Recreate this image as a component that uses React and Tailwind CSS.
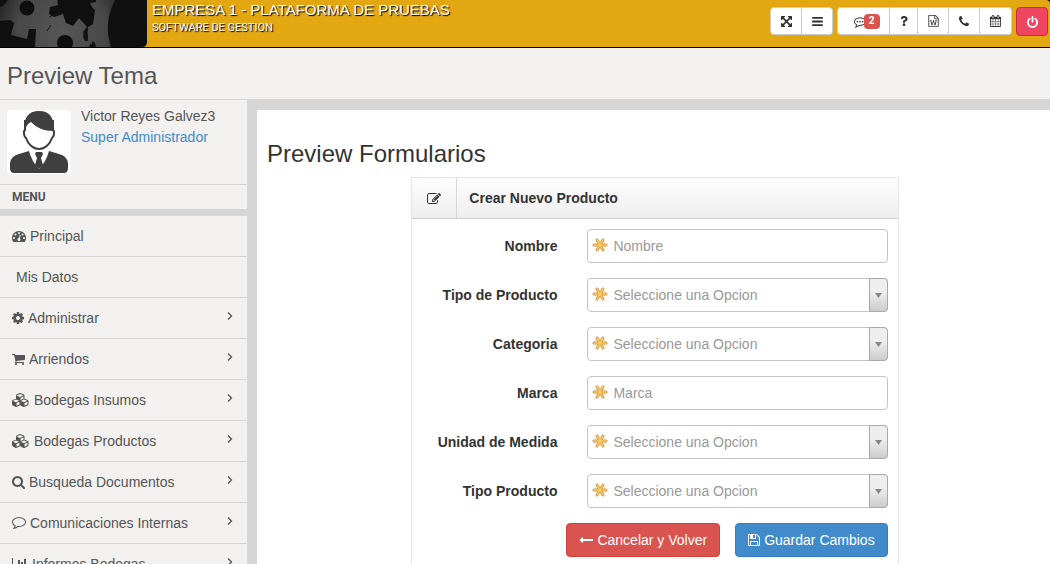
import React from "react";
import { FaQuestion } from "react-icons/fa";

const ICONS = {
  expand: ["0 0 1536 1536", "M1283 413L928 768l355 355 144-144q29-31 70-14 39 17 39 59v448q0 26-19 45t-45 19h-448q-42 0-59-40-17-39 14-69l144-144-355-355-355 355 144 144q31 30 14 69-17 40-59 40H64q-26 0-45-19t-19-45v-448q0-42 40-59 39-17 69 14l144 144 355-355-355-355-144 144q-19 19-45 19-12 0-24-5-40-17-40-59V64q0-26 19-45T64 0h448q42 0 59 40 17 39-14 69L413 253l355 355 355-355-144-144q-31-30-14-69 17-40 59-40h448q26 0 45 19t19 45v448q0 42-39 59-13 5-25 5-26 0-45-19z"],
  bars: ["0 0 1536 1280", "M64 0h1408q64 0 64 64v128q0 64-64 64H64Q0 256 0 192V64Q0 0 64 0zM64 512h1408q64 0 64 64v128q0 64-64 64H64Q0 768 0 704V576q0-64 64-64zM64 1024h1408q64 0 64 64v128q0 64-64 64H64q-64 0-64-64v-128q0-64 64-64z"],
  word: ["0 0 1536 1792", "M1468 380q28 28 48 76t20 88v1152q0 40-28 68t-68 28H96q-40 0-68-28t-28-68V96q0-40 28-68T96 0h896q40 0 88 20t76 48zm-444-244v376h376q-10-29-22-41l-313-313q-12-12-41-22zm384 1528V640H992q-40 0-68-28t-28-68V128H128v1536h1280zM233 768v107h70l164 661h159l128-485q7-20 10-46 2-16 2-24h4l3 24q1 3 3.5 20t5.5 26l128 485h159l164-661h70V768h-300v107h90l-99 438q-5 20-7 46l-2 21h-4l-3-21q-1-5-4-21t-5-25L825 768H711l-144 545q-1 4-4.5 24.5T557 1359l-4 21h-4l-2-21q-2-26-7-46l-99-438h90V768H233z"],
  phone: ["0 0 1408 1408", "M1408 1112q0 27-10 70.5t-21 68.5q-21 50-122 106-94 51-186 51-27 0-53-3.5t-57.5-12.5-47-14.5-55.5-20.5-49-18q-98-35-175-83-127-79-264-216T152 776q-48-77-83-175-3-9-18-49t-20.5-55.5-14.5-47T3.5 392 0 339q0-92 51-186Q107 52 157 31q25-11 68.5-21T296 0q14 0 21 3 18 6 53 76 11 19 30 54t35 63.5 31 53.5q3 4 17.5 25t21.5 35.5 7 28.5q0 20-28.5 50t-62 55-62 53-28.5 46q0 9 5 22.5t8.5 20.5 14 24 11.5 19q76 137 174 235t235 174q2 1 19 11.5t24 14 20.5 8.5 22.5 5q18 0 46-28.5t53-62 55-62 50-28.5q14 0 28.5 7t35.5 21.5 25 17.5q25 15 53.5 31t63.5 35 54 30q70 35 76 53 3 7 3 21z"],
  calendar: ["0 0 1664 1792", "M128 1664h288v-288H128v288zm352 0h320v-288H480v288zm-352-352h288V992H128v320zm352 0h320V992H480v320zM128 928h288V640H128v288zm736 736h320v-288H864v288zM480 928h320V640H480v288zm768 736h288v-288h-288v288zm-384-352h320V992H864v320zM512 448V160q0-13-9.5-22.5T480 128h-64q-13 0-22.5 9.5T384 160v288q0 13 9.5 22.5T416 480h64q13 0 22.5-9.5T512 448zm736 864h288V992h-288v320zM864 928h320V640H864v288zm384 0h288V640h-288v288zm32-480V160q0-13-9.5-22.5T1248 128h-64q-13 0-22.5 9.5T1152 160v288q0 13 9.5 22.5t22.5 9.5h64q13 0 22.5-9.5t9.5-22.5zm384-64v1280q0 52-38 90t-90 38H128q-52 0-90-38t-38-90V384q0-52 38-90t90-38h128v-96q0-66 47-113T416 0h64q66 0 113 47t47 113v96h384v-96q0-66 47-113t113-47h64q66 0 113 47t47 113v96h128q52 0 90 38t38 90z"],
  power: ["0 0 1536 1664", "M1536 896q0 156-61 298t-164 245-245 164-298 61-298-61-245-164T61 1194 0 896q0-182 80.5-343T307 283q43-32 95.5-25t83.5 50q32 42 24.5 94.5T461 487q-98 74-151.5 181T256 896q0 104 40.5 198.5t109.5 163.5 163.5 109.5T768 1408t198.5-40.5T1130 1258t109.5-163.5T1280 896q0-121-53.5-228T1075 487q-42-32-49.5-84.5T1050 308q31-43 84-50t95 25q146 109 226.5 270t80.5 343zM896 128v640q0 52-38 90t-90 38-90-38-38-90V128q0-52 38-90t90-38 90 38 38 90z"],
  comment: ["0 0 1792 1536", "M896 128q-204 0-381.5 69.5T232.5 385 128 640q0 112 71.5 213.5T401 1029l87 50-27 96q-24 91-70 172 152-63 275-171l43-38 57 6q69 8 130 8 204 0 381.5-69.5t282-187.5T1664 640t-104.5-255-282-187.5T896 128zm896 512q0 174-120 321.5t-326 233-450 85.5q-70 0-145-8-198 175-460 242-49 14-114 22h-5q-15 0-27-10.5t-16-27.5v-1q-3-4-.5-12t2-10 4.5-9.5l6-9 7-8.5 8-9q7-8 31-34.5t34.5-38 31-39.5 32.5-51 27-59 26-76q-157-89-247.5-220T0 640q0-130 71-248.5T262 187 548 50.5 896 0t348 50.5T1530 187t191 204.5T1792 640z"],
  cog: ["0 0 1536 1536", "M1024 768q0-106-75-181t-181-75-181 75-75 181 75 181 181 75 181-75 75-181zm512-109v222q0 12-8 23t-20 13l-185 28q-19 54-39 91 35 50 107 138 10 12 10 25t-9 23q-27 37-99 108t-94 71q-12 0-26-9l-138-108q-44 23-91 38-16 136-29 186-7 28-36 28H657q-14 0-24.5-8.5T621 1506l-28-184q-49-16-90-37l-141 107q-10 9-25 9-14 0-25-11-126-114-165-168-7-10-7-23 0-12 8-23 15-21 51-66.5t54-70.5q-27-50-41-99L29 913q-13-2-21-12.5T0 877V655q0-12 8-23t19-13l186-28q14-46 39-92-40-57-107-138-10-12-10-24 0-10 9-23 26-36 98.5-107.5T337 135q13 0 26 10l138 107q44-23 91-38 16-136 29-186 7-28 36-28h222q14 0 24.5 8.5T915 30l28 184q49 16 90 37l142-107q9-9 24-9 13 0 25 10 129 119 165 170 7 8 7 22 0 12-8 23-15 21-51 66.5t-54 70.5q26 50 41 98l183 28q13 2 21 12.5t8 23.5z"],
  cart: ["0 0 1664 1536", "M640 1408q0 52-38 90t-90 38-90-38-38-90 38-90 90-38 90 38 38 90zm896 0q0 52-38 90t-90 38-90-38-38-90 38-90 90-38 90 38 38 90zm128-1088v512q0 24-16.5 42.5T1607 896L563 1018q13 60 13 70 0 16-24 64h920q26 0 45 19t19 45-19 45-45 19H448q-26 0-45-19t-19-45q0-11 8-31.5t16-36 21.5-40T445 1051L268 252H64q-26 0-45-19T0 188t19-45 45-19h256q16 0 28.5 6.5T368 146t13 24.5 8 26 5.5 29.5 4.5 30h1201q26 0 45 19t19 45z"],
  tachometer: ["0 0 1792 1408", "M384 896q0-53-37.5-90.5T256 768t-90.5 37.5T128 896t37.5 90.5T256 1024t90.5-37.5T384 896zm192-448q0-53-37.5-90.5T448 320t-90.5 37.5T320 448t37.5 90.5T448 576t90.5-37.5T576 448zm428 481l101-382q6-26-7.5-48.5T1059 469t-48 6.5-30 39.5L880 898q-60 5-107 43.5t-63 98.5q-20 77 20 146t117 89 146-20 89-117q16-60-6-117t-72-91zm660-33q0-53-37.5-90.5T1536 768t-90.5 37.5T1408 896t37.5 90.5T1536 1024t90.5-37.5T1664 896zM1024 256q0-53-37.5-90.5T896 128t-90.5 37.5T768 256t37.5 90.5T896 384t90.5-37.5T1024 256zm448 192q0-53-37.5-90.5T1344 320t-90.5 37.5T1216 448t37.5 90.5T1344 576t90.5-37.5T1472 448zm320 448q0 261-141 483-19 29-54 29H195q-35 0-54-29Q0 1158 0 896q0-182 71-348t191-286T548 71 896 0t348 71 286 191 191 286 71 348z"],
  search: ["0 0 1664 1664", "M1152 704q0-185-131.5-316.5T704 256 387.5 387.5 256 704t131.5 316.5T704 1152t316.5-131.5T1152 704zm512 832q0 52-38 90t-90 38q-54 0-90-38l-343-342q-179 124-399 124-143 0-273.5-55.5t-225-150-150-225T0 704t55.5-273.5 150-225 225-150T704 0t273.5 55.5 225 150 150 225T1408 704q0 220-124 399l343 343q37 37 37 90z"],
  cubes: ["0 0 2176 1792", "M576 1632l384-192v-314l-384 164v342zm-64-454l404-173-404-173-404 173zm1088 454l384-192v-314l-384 164v342zm-64-454l404-173-404-173-404 173zm-448-293l384-165V454l-384 164v267zm-64-379l441-189-441-189-441 189zm1088 518v416q0 36-19 67t-52 47l-448 224q-25 14-57 14t-57-14l-448-224q-4-2-7-4-2 2-7 4l-448 224q-25 14-57 14t-57-14L71 1554q-33-16-52-47t-19-67v-416q0-38 21.5-70T78 906l434-186V320q0-38 21.5-70T590 202l384-192q23-10 50-10t50 10l448 192q35 16 56.5 48t21.5 70v400l434 186q36 16 57 48t21 70z"],
  chart: ["0 0 2048 1536", "M0 0h128v1408h1920v128H0zM384 768h256v512H384zM768 256h256v1024H768zM1152 512h256v768h-256zM1536 128h256v1152h-256z"],
  edit: ["0 0 1792 1408", "M888 1056l116-116-152-152-116 116v56h96v96h56zm440-720q-16-16-33 1L945 687q-17 17-1 33t33-1l350-350q17-17 1-33zm80 594v190q0 119-84.5 203.5T1120 1408H288q-119 0-203.5-84.5T0 1120V288Q0 169 84.5 84.5T288 0h832q63 0 117 25 15 7 18 23 3 17-9 29l-49 49q-14 14-32 8-23-6-45-6H288q-66 0-113 47t-47 113v832q0 66 47 113t113 47h832q66 0 113-47t47-113V994q0-13 9-22l64-64q15-15 35-7t20 29zm-96-738l288 288-672 672H640V864zm444 132l-92 92-288-288 92-92q28-28 68-28t68 28l152 152q28 28 28 68t-28 68z"],
  save: ["0 0 1536 1536", "M384 1408h768v-384H384v384zm896 0h128V512q0-14-10-38.5t-20-34.5l-281-281q-10-10-34-20t-39-10v416q0 40-28 68t-68 28H352q-40 0-68-28t-28-68V128H128v1280h128V992q0-40 28-68t68-28h832q40 0 68 28t28 68v416zM896 480V160q0-13-9.5-22.5T864 128H672q-13 0-22.5 9.5T640 160v320q0 13 9.5 22.5T672 512h192q13 0 22.5-9.5T896 480zm640 32v928q0 40-28 68t-68 28H96q-40 0-68-28t-28-68V96q0-40 28-68T96 0h928q40 0 88 20t76 48l280 280q28 28 48 76t20 88z"],
  back: ["0 0 1792 768", "M1792 288v192q0 14-9 23t-23 9H512v224q0 21-19 29t-35-5L74 410Q64 400 64 387q0-14 10-24L458 9q16-14 35-6 19 9 19 29v224h1248q14 0 23 9t9 23z"],
};

function Icon({ name, className = "", children }) {
  const [viewBox, d] = ICONS[name];
  return (
    <svg viewBox={viewBox} fill="currentColor" className={`shrink-0 ${className}`} aria-hidden="true">
      <path d={d} fillRule="evenodd" />
      {children}
    </svg>
  );
}

function GearsLogo() {
  return (
    <svg viewBox="0 0 147 47" className="h-[47px] w-[147px] shrink-0" aria-hidden="true">
      <defs>
        <radialGradient id="metal" gradientUnits="userSpaceOnUse" cx="62" cy="30" r="74">
          <stop offset="0" stopColor="#575757" />
          <stop offset="0.6" stopColor="#484848" />
          <stop offset="1" stopColor="#1c1c1c" />
        </radialGradient>
      </defs>
      <path d="M0 0h147v42q0 5-5 5H0z" fill="#101010" />
      <path fill="url(#metal)" d="M96 0h19q-12 23-4 47H95l-8-6 1-14 5-3 2-14-3-3-2-4 6-1z" />
      <path
        fill="url(#metal)"
        d="M8 0L4 5 0 7v14l10-1 4 3-3 12 16 4 2-10h7l-1 18h54l2-6-6-4-2-5 4-5-8-9-6 8-7-3-3-9-9 3-5-3 1-7 8-2-1-7-8-1-2-2z"
      />
      <circle cx="27" cy="8" r="7.500" fill="#0e0e0e" />
      <circle cx="65" cy="43" r="8" fill="#0e0e0e" />
      <path d="M84 32l4 2v7h-3l-2-4zM92 41l3 2 1 4h-4z" fill="#141414" />
      <path d="M49 17l6-3M51 25l-4 6" stroke="#161616" strokeWidth="1" />
    </svg>
  );
}

function Avatar() {
  return (
    <svg viewBox="0 0 64 64" className="size-16 shrink-0" aria-hidden="true">
      <rect width="64" height="64" rx="4" fill="#fff" />
      <path
        fill="#3f3f3f"
        d="M3 58v-5q1-7 9-9l10-3q3 11 10 18 7-7 10-18l10 3q8 2 9 9v5q0 5-4 5H7q-4 0-4-5z"
      />
      <path fill="#3f3f3f" d="M29 42h6l1 2-2 4 2 7-4 4-4-4 2-7-2-4z" />
      <path
        fill="#fff"
        stroke="#3f3f3f"
        strokeWidth="2"
        d="M18 20c-2 1-1 7 1 8 2 6 7 11 13 11s11-5 13-11c2-1 3-7 1-8V11H18z"
      />
      <path fill="#3f3f3f" d="M18 21C16 8 21 1 32 1s16 7 14 20c-9 0-16-3-22-9-4 2-5 5-6 9z" />
    </svg>
  );
}

function Asterisk() {
  return (
    <svg viewBox="0 0 16 16" className="pointer-events-none absolute left-[5px] top-2 size-4" aria-hidden="true">
      <g strokeLinecap="round" fill="none">
        <path d="M2 8h12M5 3l6 10M11 3L5 13" stroke="#c98f45" strokeWidth="3" />
        <path d="M2 8h12M5 3l6 10M11 3L5 13" stroke="#ffc95c" strokeWidth="1.600" />
      </g>
    </svg>
  );
}

const MENU = [
  { label: "Principal", icon: "tachometer", size: "w-3.5 h-[11px]" },
  { label: "Mis Datos" },
  { label: "Administrar", icon: "cog", size: "size-3", more: true },
  { label: "Arriendos", icon: "cart", size: "w-[13px] h-3", more: true },
  { label: "Bodegas Insumos", icon: "cubes", size: "w-[17px] h-3.5", more: true, wide: true },
  { label: "Bodegas Productos", icon: "cubes", size: "w-[17px] h-3.5", more: true, wide: true },
  { label: "Busqueda Documentos", icon: "search", size: "size-[13px]", more: true },
  { label: "Comunicaciones Internas", icon: "comment", size: "w-3.5 h-3", more: true },
  { label: "Informes Bodegas", icon: "chart", size: "w-4 h-3", more: true },
];

const FIELDS = [
  { id: "nombre", label: "Nombre" },
  { id: "tipo-de-producto", label: "Tipo de Producto", select: true },
  { id: "categoria", label: "Categoria", select: true },
  { id: "marca", label: "Marca" },
  { id: "unidad", label: "Unidad de Medida", select: true },
  { id: "tipo-producto", label: "Tipo Producto", select: true },
];

const TOOL = "flex h-7 items-center justify-center border-[#ccc] bg-white text-[#333]";

function Header() {
  return (
    <header className="flex h-12 shrink-0 border-b border-black bg-black">
      <div className="flex min-w-0 flex-1 rounded-tr bg-[#e3a712]">
        <GearsLogo />
        <div className="min-w-0 flex-1 pl-[5px] text-white [text-shadow:1px_1px_1px_#000]">
          <p className="text-[15px] leading-5">EMPRESA 1 - PLATAFORMA DE PRUEBAS</p>
          <p className="font-[Roboto,sans-serif] text-[11px] leading-4">SOFTWARE DE GESTION</p>
        </div>
        <div className="flex gap-1 pr-0.5 pt-[7px]">
          <div className="flex h-7">
            <button aria-label="Pantalla completa" className={`${TOOL} w-8 rounded-l-sm border`}>
              <Icon name="expand" className="size-[11px]" />
            </button>
            <button aria-label="Ocultar menu" className={`${TOOL} w-[31px] rounded-r-sm border-y border-r`}>
              <Icon name="bars" className="h-[9px] w-[11px]" />
            </button>
          </div>
          <div className="flex h-7">
            <button aria-label="Mensajes" className={`${TOOL} w-[53px] rounded-l-sm border pl-1.5`}>
              <Icon name="comment" className="mt-[3px] h-[11px] w-3">
                <circle cx="512" cy="640" r="120" />
                <circle cx="896" cy="640" r="120" />
                <circle cx="1280" cy="640" r="120" />
              </Icon>
              <span className="-ml-0.5 flex h-[15px] w-4 items-center justify-center rounded-sm bg-[#d9534f] font-[Roboto,sans-serif] text-[10px] font-bold leading-none text-white">
                2
              </span>
            </button>
            <button aria-label="Ayuda" className={`${TOOL} w-7 border-y border-r`}>
              <FaQuestion className="size-2.5" />
            </button>
            <button aria-label="Documento Word" className={`${TOOL} w-[31px] border-y border-r`}>
              <Icon name="word" className="h-3 w-[11px]" />
            </button>
            <button aria-label="Telefono" className={`${TOOL} w-[31px] border-y border-r`}>
              <Icon name="phone" className="size-2.5" />
            </button>
            <button aria-label="Calendario" className={`${TOOL} w-8 rounded-r-sm border-y border-r`}>
              <Icon name="calendar" className="h-3 w-[11px]" />
            </button>
          </div>
          <button
            aria-label="Salir"
            className="flex h-[29px] w-8 items-center justify-center rounded-sm border border-[#c22f44] bg-[#ef4560] text-white"
          >
            <Icon name="power" className="h-3 w-[11px]" />
          </button>
        </div>
      </div>
    </header>
  );
}

function Sidebar() {
  return (
    <aside className="w-[247px] shrink-0 border-t border-[#d6d6d6] bg-[#f2f1ef]">
      <div className="flex h-[84px] gap-2.5 px-[7px] pt-2.5">
        <Avatar />
        <div className="-mt-1">
          <p className="leading-5">Victor Reyes Galvez3</p>
          <a href="#perfil" className="block leading-[22px] text-[#428bca]">
            Super Administrador
          </a>
        </div>
      </div>
      <h2 className="h-[25px] border-t border-[#d6d6d6] px-3 font-[Roboto,sans-serif] text-xs font-bold leading-6">MENU</h2>
      <nav className="border-t-[7px] border-[#d6d6d6]">
        <ul>
          {MENU.map((m) => (
            <li key={m.label} className="border-b border-[#d6d6d6]">
              <a href="#menu" className={`flex h-10 items-center ${m.icon ? "px-3" : "px-4"}`}>
                {m.icon && <Icon name={m.icon} className={m.size} />}
                <span className={`flex-1 ${m.wide ? "pl-[5px]" : m.icon ? "pl-1" : ""}`}>{m.label}</span>
                {m.more && (
                  <svg viewBox="0 0 6 8" className="mb-1 mr-0.5 h-2 w-1.5" aria-hidden="true">
                    <path d="M1 .5L4.500 4 1 7.500" fill="none" stroke="currentColor" strokeWidth="1.300" />
                  </svg>
                )}
              </a>
            </li>
          ))}
        </ul>
      </nav>
    </aside>
  );
}

function Field({ field }) {
  return (
    <div className="-mx-[15px] mb-[15px] flex">
      <label htmlFor={field.id} className="w-4/12 px-[15px] pt-[7px] text-right font-bold leading-5">
        {field.label}
      </label>
      <div className="w-8/12 px-[15px]">
        <div className="relative">
          {field.select ? (
            <>
              <select
                id={field.id}
                className="block h-[34px] w-full appearance-none rounded border border-[#c4c4c4] bg-white pl-[25px] pr-5 text-[#999]"
              >
                <option>Seleccione una Opcion</option>
              </select>
              <span className="pointer-events-none absolute inset-y-0 right-0 flex w-[19px] items-center justify-center rounded-r border border-[#aaa] bg-linear-to-t from-[#ccc] to-[#eee] to-60%">
                <svg viewBox="0 0 7 5" className="h-[5px] w-[7px]" aria-hidden="true">
                  <path d="M0 0h7L3.500 5z" fill="#888" />
                </svg>
              </span>
            </>
          ) : (
            <input
              id={field.id}
              type="text"
              placeholder={field.label}
              className="block h-[34px] w-full rounded border border-[#c4c4c4] bg-white pl-[25px] pr-3 placeholder:text-[#999]"
            />
          )}
          <Asterisk />
        </div>
      </div>
    </div>
  );
}

export default function App() {
  return (
    <div className="flex h-screen flex-col overflow-hidden bg-[#d6d6d6] font-['Liberation_Sans',Arial,sans-serif] text-sm text-[#555]">
      <Header />
      <div className="h-[51px] shrink-0 bg-[#f2f1ef] px-[7px]">
        <h1 className="text-2xl leading-[56px]">Preview Tema</h1>
      </div>
      <div className="flex min-h-0 flex-1">
        <Sidebar />
        <main className="ml-2.5 mt-[11px] min-w-0 flex-1 bg-white pl-2.5 pr-[7px] text-[#333]">
          <h2 className="pb-2.5 pt-[30px] text-2xl leading-[27px]">Preview Formularios</h2>
          <div className="mx-auto w-8/12 px-[15px]">
            <section className="border border-[#e5e5e5]">
              <header className="flex h-[41px] border-b border-[#cdcdcd] bg-linear-to-b from-[#fdfdfd] to-[#eee]">
                <div className="flex w-[45px] items-center justify-center border-r border-[#d6d6d6]">
                  <Icon name="edit" className="h-[11px] w-3.5" />
                </div>
                <h3 className="px-3 font-bold leading-10">Crear Nuevo Producto</h3>
              </header>
              <form className="p-2.5" onSubmit={(e) => e.preventDefault()}>
                {FIELDS.map((f) => (
                  <Field key={f.id} field={f} />
                ))}
                <div className="flex justify-end gap-[15px] pb-5">
                  <a
                    href="#volver"
                    className="flex h-[34px] items-center gap-1 rounded border border-[#d43f3a] bg-[#d9534f] px-3 text-white"
                  >
                    <Icon name="back" className="h-1.5 w-3.5" />
                    Cancelar y Volver
                  </a>
                  <button
                    type="submit"
                    className="flex h-[34px] items-center gap-1 rounded border border-[#357ebd] bg-[#428bca] px-3 text-white"
                  >
                    <Icon name="save" className="size-3" />
                    Guardar Cambios
                  </button>
                </div>
              </form>
            </section>
          </div>
        </main>
      </div>
    </div>
  );
}
